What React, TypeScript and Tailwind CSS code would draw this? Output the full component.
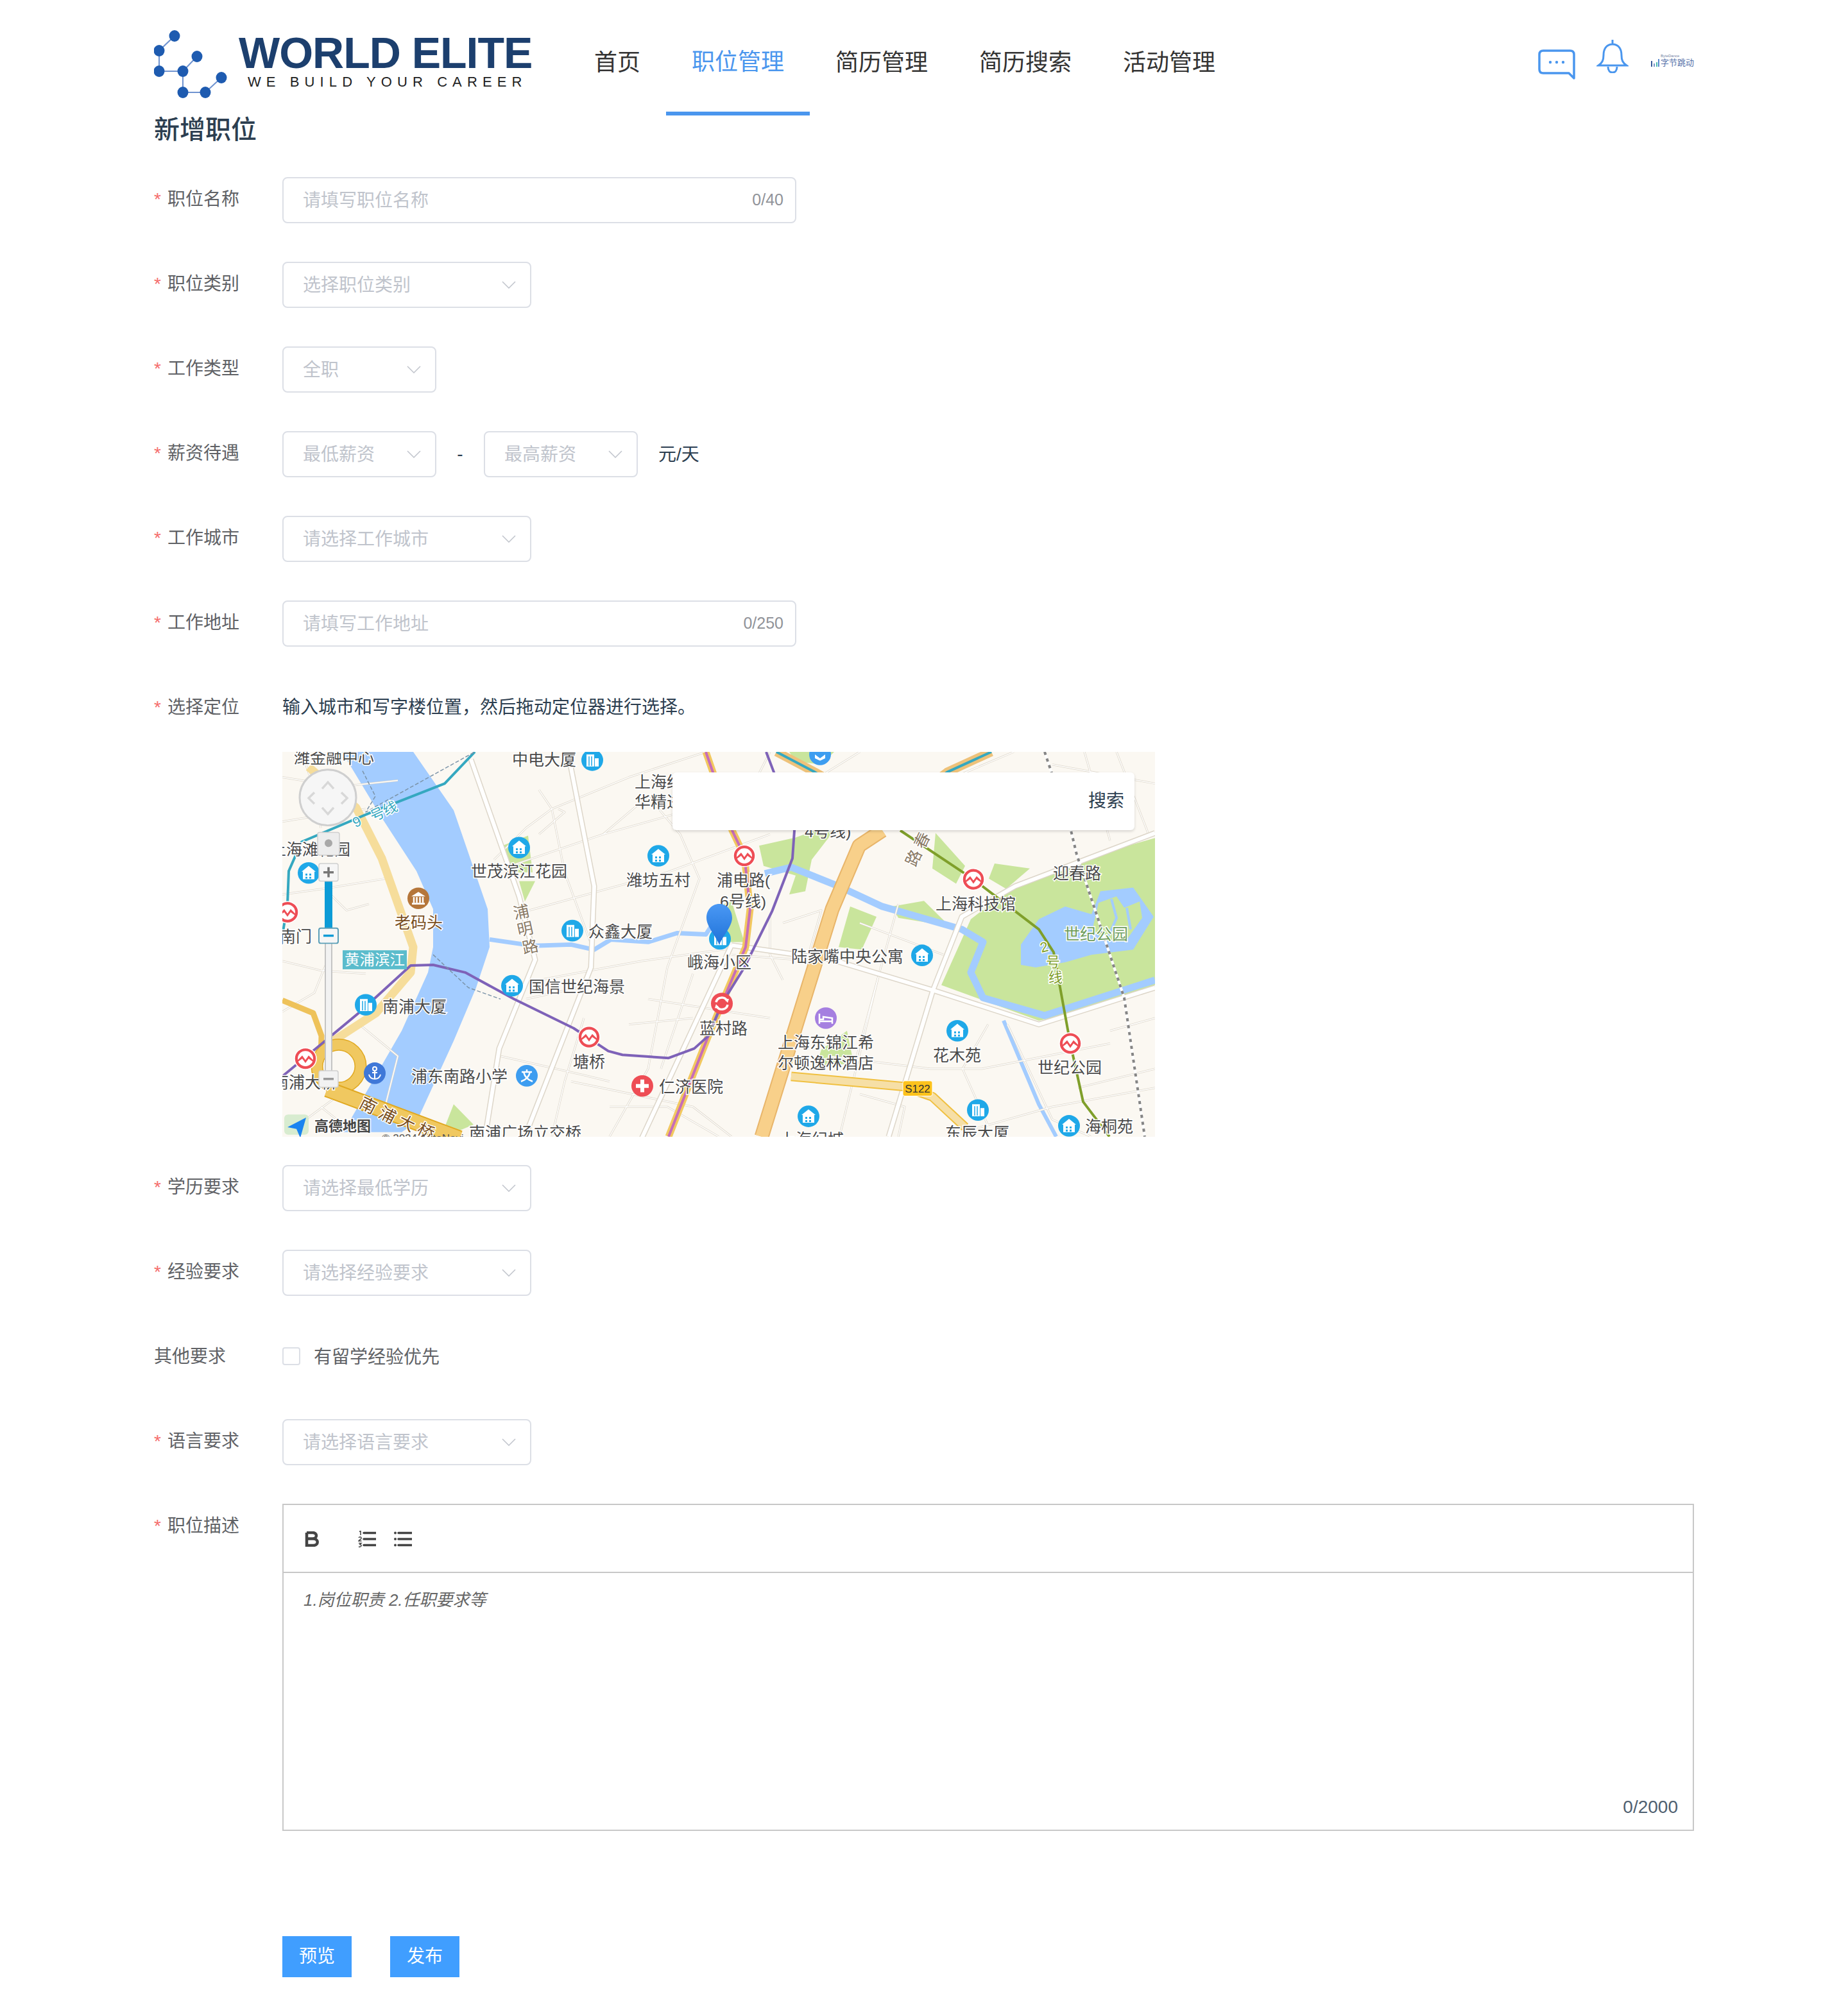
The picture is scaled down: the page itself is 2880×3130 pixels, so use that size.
const navItems = ['首页', '职位管理', '简历管理', '简历搜索', '活动管理']

const thinRoads = [
  'M0 40 L90 55 L180 45', 'M0 110 L60 100 L130 90', 'M0 225 L70 215 L160 200', 'M0 330 L60 345 L130 350', 'M0 410 L50 380 L70 330',
  'M70 220 L100 250 L135 240', 'M30 0 L50 60 L60 120', 'M60 560 L110 600', 'M120 430 L180 480 L160 560', 'M10 600 L90 540',
  'M330 170 L380 120 L420 90 L540 40 L660 0', 'M330 120 L350 170 L390 300', 'M400 60 L420 90 L440 190 L480 300', 'M355 180 L500 130 L640 90',
  'M400 130 L440 95 L430 90', 'M385 250 L600 190 L760 130', 'M500 130 L570 70 L620 130 L650 200 L600 340', 'M600 340 L570 500 L510 607',
  'M400 360 L560 330 L700 310', 'M570 390 L760 420', 'M540 430 L640 420', 'M470 420 L440 520 L420 607', 'M380 390 L470 370', 'M340 480 L470 510 L510 520',
  'M450 520 L640 560 L700 607', 'M640 350 L590 500', 'M510 560 L600 560 L680 607', 'M700 320 L830 330', 'M760 260 L760 320 L780 360', 'M780 270 L840 250 L820 320',
  'M820 50 L900 0', 'M735 50 L760 0', 'M900 270 L1030 320', 'M960 240 L930 350 L890 500', 'M930 350 L870 600', 'M850 480 L1010 500 L1090 500 L1290 460',
  'M1100 430 L1060 500 L1100 590', 'M1130 430 L1200 580 L1260 607', 'M900 540 L970 560 L960 607', 'M1060 600 L1200 560 L1360 530', 'M1250 0 L1290 140', 'M1300 0 L1350 130',
  'M1000 60 L1140 0', 'M1200 20 L1360 50', 'M1240 530 L1360 500', 'M1290 440 L1360 420', 'M1180 90 L1230 40',
]

const whiteRoads = [
  'M1360 372 L1179 430 L1014 376 L857 328 L700 305',
  'M1014 376 L945 607',
  'M1014 376 L1059 260 L1142 212 L1360 128',
  'M445 0 L486 212 L481 340 L378 607',
  'M294 12 L369 228 L394 328 L338 468 L316 607',
  'M560 610 L700 305',
]

const redMetro = [
  [720, 164], [1077, 201], [1228, 460], [8, 253], [478, 450], [36, 484],
]

const houseIcons = [
  [369, 151], [586, 164], [41, 191], [358, 369], [997, 321], [1052, 440], [1226, 590], [820, 575],
]

const officeIcons = [
  [483, 13], [452, 282], [130, 399], [1084, 565], [682, 295],
]

const labels: { t: string; x: number; y: number; c?: string; rot?: number }[] = [
  { t: '潍金融中心', x: 18, y: 10 },
  { t: '中电大厦', x: 358, y: 13 },
  { t: '上海纺', x: 549, y: 48 },
  { t: '华精进', x: 549, y: 80 },
  { t: '上海滩花园', x: -19, y: 154 },
  { t: '南门', x: -4, y: 292 },
  { t: '老码头', x: 175, y: 270, c: '#7a4f1e' },
  { t: '世茂滨江花园', x: 294, y: 189 },
  { t: '潍坊五村', x: 536, y: 203 },
  { t: '浦电路(', x: 677, y: 203 },
  { t: '6号线)', x: 682, y: 236 },
  { t: '众鑫大厦', x: 477, y: 284 },
  { t: '国信世纪海景', x: 384, y: 371 },
  { t: '南浦大厦', x: 156, y: 402 },
  { t: '峨海小区', x: 631, y: 333 },
  { t: '蓝村路', x: 650, y: 437 },
  { t: '塘桥', x: 453, y: 489 },
  { t: '南浦大桥', x: -15, y: 522 },
  { t: '浦东南路小学', x: 201, y: 513 },
  { t: '仁济医院', x: 587, y: 529 },
  { t: '南浦广场立交桥', x: 291, y: 602 },
  { t: '4号线)', x: 814, y: 126 },
  { t: '迎春路', x: 1201, y: 192 },
  { t: '上海科技馆', x: 1018, y: 240 },
  { t: '世纪公园', x: 1218, y: 288, c: '#6f9e5e' },
  { t: '陆家嘴中央公寓', x: 793, y: 323 },
  { t: '上海东锦江希', x: 772, y: 459 },
  { t: '尔顿逸林酒店', x: 772, y: 491 },
  { t: '花木苑', x: 1014, y: 479 },
  { t: '世纪公园', x: 1177, y: 499 },
  { t: '海桐苑', x: 1251, y: 592 },
  { t: '东辰大厦', x: 1033, y: 602 },
  { t: '上海纪城', x: 775, y: 612 },
]

function MapPicture() {
  return (
    <svg width="1360" height="600" viewBox="0 0 1360 600" className="block">
      <rect width="1360" height="600" fill="#fbf8f2" />

      <g transform="scale(1 0.988)">
        {/* parks */}
        <g fill="#c9e59c">
          <path d="M1360 136 L1248 168 L1165 200 L1119 228 L1073 264 L1027 368 L1179 424 L1234 412 L1360 368 Z" />
          <path d="M885 244 L926 260 L903 312 L867 308 Z" />
          <path d="M743 148 L800 135 L830 124 L860 124 L825 170 L815 220 L790 225 L800 195 L750 180 Z" />
          <path d="M1018 128 L1064 180 L1050 208 L1013 184 Z" />
          <path d="M1110 176 L1165 184 L1128 216 L1101 200 Z" />
          <path d="M343 148 L383 132 L390 190 L350 190 Z" />
          <path d="M369 204 L394 204 L378 236 Z" />
          <path d="M267 556 L298 588 L270 600 L250 600 Z" />
          <path d="M950 244 L1000 235 L1040 275 L960 262 Z" />
          <path d="M790 0 L860 0 L840 20 L800 15 Z" />
          <path d="M670 248 L700 235 L720 300 L690 300 Z" />
          <path d="M840 470 L880 440 L890 490 L830 500 Z" />
        </g>

        {/* water */}
        <g fill="#a3ccff">
          <path d="M93 0 L204 0 L267 92 L320 248 L323 308 L302 372 L267 456 L209 584 L186 600 L95 600 L186 440 L227 348 L235 308 L235 248 L209 188 L155 104 Z" />
          <path d="M1179 264 L1220 244 L1261 256 L1275 220 L1326 214 L1358 260 L1326 312 L1261 320 L1220 332 L1174 340 L1151 336 L1151 304 Z" />
        </g>
        <path d="M1272 238 L1300 228 L1312 246 L1336 236 L1340 262 L1316 296 L1284 298 L1262 282 Z" fill="#c9e59c" />
        <g fill="none" stroke="#a3ccff" strokeLinejoin="round">
          <path d="M752 192 L793 182 L867 212 L935 244 L1059 280 L1092 300 L1073 348 L1092 388 L1188 416 L1360 360" strokeWidth="11" />
          <path d="M323 296 L392 306 L450 304 L486 312 L512 296 L570 300 L615 286 L660 288 L673 268" strokeWidth="7" />
          <path d="M1124 424 L1179 556 L1206 607" strokeWidth="6" />
          <path d="M1292 232 L1300 262 L1288 290 M1316 246 L1322 280" strokeWidth="4" />
        </g>

        {/* roads */}
        <g fill="none" strokeLinejoin="round">
          <g stroke="#ddd6c9" strokeWidth="3">
            {thinRoads.map((d) => (
              <path key={d} d={d} />
            ))}
          </g>
          <g stroke="#fff" strokeWidth="1.5">
            {thinRoads.map((d) => (
              <path key={d} d={d} />
            ))}
          </g>
          <g stroke="#ddd6c9" strokeWidth="9">
            {whiteRoads.map((d) => (
              <path key={d} d={d} />
            ))}
          </g>
          <g stroke="#fff" strokeWidth="6">
            {whiteRoads.map((d) => (
              <path key={d} d={d} />
            ))}
          </g>

          <path d="M935 124 L899 148 L857 248 L830 336 L747 607" stroke="#e8b56a" strokeWidth="23" />
          <path d="M935 124 L899 148 L857 248 L830 336 L747 607" stroke="#f8d08a" strokeWidth="19" />
          <path d="M41 24 L115 88 L155 168 L204 308 L200 348 L146 412 L79 456" stroke="#f6dd9b" strokeWidth="13" />
          <path d="M0 392 L48 412 L61 448 L60 490" stroke="#eec25a" strokeWidth="9" />
          <path d="M793 512 L968 528 L1013 544 L1064 592" stroke="#f0c040" strokeWidth="15" />
          <path d="M793 512 L968 528 L1013 544 L1064 592" stroke="#f6dfa6" strokeWidth="11" />
          <circle cx="88" cy="496" r="34" stroke="#e0a820" strokeWidth="19" />
          <circle cx="88" cy="496" r="34" stroke="#f0c860" strokeWidth="16" />
          <path d="M70 532 L276 610" stroke="#e0a820" strokeWidth="26" />
          <path d="M70 532 L276 610" stroke="#f0c860" strokeWidth="22" />
          <path d="M770 0 L830 32 L870 55" stroke="#eec27a" strokeWidth="14" />
          <path d="M1105 0 L1036 32 L1000 60" stroke="#eec27a" strokeWidth="14" />
          <path d="M602 607 L664 448 L692 380 L722 308 L729 248 L720 164 L701 124 L671 32 L660 0" stroke="#f2c860" strokeWidth="11" />

          <path d="M300 0 L253 50 L137 96 L30 142 L10 188 L8 240 L0 290" stroke="#35a8c0" strokeWidth="4" />
          <path d="M770 0 L830 32 L870 55" stroke="#35a8c0" strokeWidth="4" />
          <path d="M1105 0 L1036 32 L1000 60" stroke="#35a8c0" strokeWidth="4" />
          <path d="M602 607 L664 448 L692 380 L722 308 L729 248 L720 164 L701 124 L671 32 L660 0" stroke="#c66db8" strokeWidth="4" />
          <path d="M0 512 L119 412 L200 337 L235 336 L285 348 L361 390 L454 436 L508 472 L530 478 L602 483 L642 468 L664 448 L685 397 L720 340 L763 252 L795 168 L798 124 L766 32 L754 0" stroke="#7e62b8" strokeWidth="4" />
          <path d="M963 124 L1077 201 L1179 280 L1202 316 L1228 460 L1248 552 L1289 607" stroke="#7f9f2a" strokeWidth="4" />
          <path d="M1188 0 L1229 124 L1238 162 L1312 388 L1344 607" stroke="#fff" strokeWidth="4" />
          <path d="M1188 0 L1229 124 L1238 162 L1312 388 L1344 607" stroke="#858585" strokeWidth="4" strokeDasharray="5 6" />
          <path d="M235 320 L290 372 L340 390" stroke="#7b93a8" strokeWidth="1.5" strokeDasharray="6 3" />
          <path d="M125 30 L145 70 L130 95 L300 0" stroke="#7b93a8" strokeWidth="1.5" strokeDasharray="6 3" />
        </g>

        {/* labels */}
        <g fontSize="25" dominantBaseline="central" stroke="#fff" strokeWidth="3" className="[paint-order:stroke]">
          {labels.map((l) => (
            <text key={l.t + l.x} x={l.x} y={l.y} fill={l.c ?? '#4a4a4a'}>
              {l.t}
            </text>
          ))}
          <g fill="#8a7a66">
            <text x="360" y="253" transform="rotate(-12 372 253)">浦</text>
            <text x="366" y="280" transform="rotate(-12 378 280)">明</text>
            <text x="374" y="308" transform="rotate(-12 386 308)">路</text>
            <text x="985" y="140" transform="rotate(-65 997 140)">春</text>
            <text x="972" y="168" transform="rotate(-65 984 168)">路</text>
          </g>
          <g fill="#35a8c0" fontSize="22">
            <text x="110" y="110" transform="rotate(-25 117 110)">9</text>
            <text x="136" y="93" transform="rotate(-25 160 93)">号线</text>
          </g>
          <g fill="#7f9f2a" fontSize="22">
            <text x="1181" y="308" transform="rotate(-15 1187 308)">2</text>
            <text x="1190" y="332">号</text>
            <text x="1194" y="356">线</text>
          </g>
          <g fill="#7a4f1e" fontSize="26">
            <text x="122" y="552" transform="rotate(27 122 552)">南</text>
            <text x="152" y="567" transform="rotate(27 152 567)">浦</text>
            <text x="182" y="580" transform="rotate(27 182 580)">大</text>
            <text x="212" y="593" transform="rotate(27 212 593)">桥</text>
          </g>
        </g>

        {/* scenic tag */}
        <rect x="94" y="313" width="100" height="30" fill="#5bbccc" />
        <text x="97" y="328" fontSize="23.5" fill="#fff" dominantBaseline="central">黄浦滨江</text>

        {/* metro stations */}
        {redMetro.map(([x, y]) => (
          <g key={`${x}-${y}`} transform={`translate(${x} ${y})`}>
            <circle r="17" fill="#ee4d55" stroke="#fff" strokeWidth="1.5" />
            <circle r="12" fill="#fff" />
            <path d="M-12 2 L-5 -5 L0 2 L5 -5 L12 2 L12 5 L5 0 L0 7 L-5 0 L-12 5 Z" fill="#ee4d55" />
          </g>
        ))}
        <g transform="translate(685 397)">
          <circle r="17" fill="#ee4d55" />
          <path d="M-9 -2 A9 9 0 0 1 8 -4 M9 2 A9 9 0 0 1 -8 4" fill="none" stroke="#fff" strokeWidth="3.5" />
          <path d="M4 -8 L11 -7 L9 -1 Z M-4 8 L-11 7 L-9 1 Z" fill="#fff" />
        </g>

        {/* poi icons */}
        {houseIcons.map(([x, y]) => (
          <g key={`${x}-${y}`} transform={`translate(${x} ${y})`}>
            <circle r="17" fill="#1fa8e8" />
            <path d="M0 -11 L11 -2 L9 -2 L9 10 L-9 10 L-9 -2 L-11 -2 Z" fill="#fff" />
            <path d="M-5 1 H-2 V4 H-5 Z M1 1 H4 V4 H1 Z M-5 6 H-2 V9 H-5 Z M1 6 H4 V9 H1 Z" fill="#1fa8e8" />
          </g>
        ))}
        {officeIcons.map(([x, y]) => (
          <g key={`${x}-${y}`} transform={`translate(${x} ${y})`}>
            <circle r="17" fill="#1fa8e8" />
            <path d="M-9 10 V-9 H3 V10 Z M4 10 V-3 H10 V10 Z" fill="#fff" />
            <path d="M-5 -6 V9 M-1 -6 V9" stroke="#1fa8e8" strokeWidth="1.5" />
          </g>
        ))}
        <g transform="translate(212 231)">
          <circle r="17" fill="#b5763a" />
          <path d="M-11 -3 L0 -10 L11 -3 Z M-10 7 H10 V10 H-10 Z" fill="#fff" />
          <path d="M-7 -2 V7 M-2.5 -2 V7 M2.5 -2 V7 M7 -2 V7" stroke="#fff" strokeWidth="2.5" />
        </g>
        <g transform="translate(144 507)">
          <circle r="17" fill="#3f78d8" />
          <circle cy="-7" r="3" fill="none" stroke="#fff" strokeWidth="2" />
          <path d="M0 -4 V9 M-9 2 C-8 7 -4 9 0 9 C4 9 8 7 9 2 M-4 -1 H4" fill="none" stroke="#fff" strokeWidth="2" />
        </g>
        <g transform="translate(381 511)">
          <circle r="17" fill="#3d9df0" />
          <path d="M-8 -6 H8 M0 -10 V-6 M-5 -6 C-3 3 3 7 9 9 M5 -6 C3 3 -3 7 -9 9" fill="none" stroke="#fff" strokeWidth="2.5" />
        </g>
        <g transform="translate(561 527)">
          <circle r="17" fill="#ee4d55" />
          <path d="M-3 -10 H3 V-3 H10 V3 H3 V10 H-3 V3 H-10 V-3 H-3 Z" fill="#fff" />
        </g>
        <g transform="translate(847 420)">
          <circle r="17" fill="#a57fe0" />
          <path d="M-10 -7 V9 M10 1 V9 M-10 5 H10 V0 L-4 -2 V2 H-10" fill="none" stroke="#fff" strokeWidth="2.5" />
        </g>
        <g transform="translate(838 4)">
          <circle r="17" fill="#3d9df0" />
          <path d="M-8 0 L0 6 L8 0 V6 L0 10 L-8 6 Z" fill="#fff" />
        </g>

        {/* road shield */}
        <rect x="967" y="519" width="46" height="24" rx="3" fill="#fdc21c" stroke="#fff" />
        <text x="990" y="532" fontSize="17" fill="#333" textAnchor="middle" dominantBaseline="central" className="font-['Liberation_Sans_Narrow','Liberation_Sans',sans-serif]">S122</text>

        {/* marker */}
        <defs>
          <linearGradient id="pinFill" x1="0" y1="0" x2="0" y2="1">
            <stop offset="0" stopColor="#4a98f4" />
            <stop offset="1" stopColor="#1f72d8" />
          </linearGradient>
        </defs>
        <path d="M681 240 C669 240 661 250 661 262 C661 275 675 290 681 304 C687 290 701 275 701 262 C701 250 693 240 681 240 Z" fill="url(#pinFill)" />

        {/* amap zoom control */}
        <circle cx="71" cy="72" r="44" fill="#f6f6f6" stroke="#cfcfcf" strokeWidth="3" />
        <path d="M62 58 L71 48 L80 58 M62 88 L71 98 L80 88 M50 64 L41 73 L50 82 M92 64 L101 73 L92 82" fill="none" stroke="#d8d8d8" strokeWidth="3.5" />
        <rect x="67" y="276" width="10" height="240" fill="#f2f2f2" stroke="#c4c4c4" strokeWidth="2" />
        <rect x="66" y="204" width="12" height="76" fill="#0c9bd6" />
        <rect x="55" y="127" width="34" height="36" rx="3" fill="#ededed" stroke="#cfcfcf" strokeWidth="1.5" />
        <circle cx="72" cy="144" r="6" fill="#a8a8a8" />
        <rect x="57" y="176" width="30" height="28" rx="3" fill="#f6f6f6" stroke="#cfcfcf" strokeWidth="1.5" />
        <path d="M64 190 H80 M72 182 V198" stroke="#777" strokeWidth="3.5" />
        <rect x="57" y="278" width="30" height="24" rx="3" fill="#f6f6f6" stroke="#5b9fb8" strokeWidth="2" />
        <path d="M64 290 H80" stroke="#0c9bd6" strokeWidth="3.5" />
        <rect x="57" y="503" width="30" height="26" rx="3" fill="#f2f2f2" stroke="#cfcfcf" strokeWidth="1.5" />
        <path d="M64 516 H80" stroke="#999" strokeWidth="3.5" />

        {/* amap logo */}
        <rect x="3" y="572" width="38" height="32" rx="6" fill="#d8ecd0" />
        <path d="M37 577 L8 592 L22 595 L28 609 Z" fill="#1a84f0" />
        <text x="50" y="591" fontSize="22" fontWeight="700" fill="#444" stroke="#fff" strokeWidth="3" dominantBaseline="central" className="[paint-order:stroke]">高德地图</text>
        <text x="155" y="610" fontSize="17" fill="#555" dominantBaseline="central">© 2024 AutoNavi</text>
      </g>
    </svg>
  )
}

function Chevron() {
  return (
    <svg width="22" height="12" viewBox="0 0 22 12" fill="none" stroke="#c0c4cc" strokeWidth="1.5">
      <path d="M1 1 L11 11 L21 1" />
    </svg>
  )
}

function SelectBox({ text, width }: { text: string; width: string }) {
  return (
    <div className={`flex h-[72px] items-center justify-between rounded-lg border-2 border-[#dcdfe6] bg-white pl-[30px] pr-[22px] text-[#c0c4cc] ${width}`}>
      <span className="pt-[2px]">{text}</span>
      <Chevron />
    </div>
  )
}

function TextBox({ text, count }: { text: string; count: string }) {
  return (
    <div className="flex h-[72px] w-[801px] items-center justify-between rounded-lg border-2 border-[#dcdfe6] bg-white pl-[30px] pr-[18px]">
      <span className="pt-[2px] text-[#c0c4cc]">{text}</span>
      <span className="text-[25px] text-[#909399]">{count}</span>
    </div>
  )
}

function Row({ label, required = true, children }: { label: string; required?: boolean; children: React.ReactNode }) {
  return (
    <div className="flex">
      <div className="w-[200px] shrink-0 leading-[70px] text-[#606266]">
        {required && <span className="mr-[10px] text-[#f56c6c]">*</span>}
        {label}
      </div>
      <div className="min-w-0 flex-1">{children}</div>
    </div>
  )
}

export default function App() {
  return (
    <div className="h-[3130px] w-[2880px] bg-white px-[240px] font-['Liberation_Sans','Noto_Sans_CJK_SC',sans-serif] text-[28px]">
      <header className="flex h-[180px] items-stretch justify-between">
        <div className="flex">
          <div className="relative w-[646px]">
            <svg width="125" height="110" viewBox="240 45 125 110" className="absolute left-0 top-[45px]">
              <path d="M272 56 L248 79 V111 H285 V144 H320 L345 121 M285 111 L307 88" fill="none" stroke="#6f93d0" strokeWidth="2" />
              {[[272, 56], [248, 79], [307, 88], [248, 111], [285, 111], [345, 121], [285, 144], [320, 144]].map(([cx, cy]) => (
                <ellipse key={`${cx}-${cy}`} cx={cx} cy={cy} rx="8.5" ry="9" fill="#1e5bb0" />
              ))}
            </svg>
            <div className="absolute left-[132px] top-[44px] whitespace-nowrap text-[68px] font-bold leading-[76px] tracking-[-1px] text-[#1c3f6e]">WORLD ELITE</div>
            <div className="absolute left-[146px] top-[116px] whitespace-nowrap text-[22px] leading-[24px] tracking-[8.1px] text-[#222]">WE BUILD YOUR CAREER</div>
          </div>
          <nav className="flex text-[36px] text-[#333]">
            {navItems.map((item) => (
              <div
                key={item}
                className={`flex items-center border-b-[6px] px-10 ${item === '职位管理' ? 'border-[#4a96ee] pt-[20px] text-[#4a96ee]' : 'border-transparent pt-[22px]'}`}
              >
                {item}
              </div>
            ))}
          </nav>
        </div>

        <div className="flex items-start pt-[62px]">
          <svg width="58" height="48" viewBox="0 0 58 48" fill="none" className="mt-[15px]">
            <path d="M8 2 H50 Q56 2 56 8 V45 L48 37 H8 Q2 37 2 31 V8 Q2 2 8 2 Z" stroke="#4a96ee" strokeWidth="3.5" strokeLinejoin="round" />
            <circle cx="19" cy="20" r="2.2" fill="#4a96ee" />
            <circle cx="29" cy="20" r="2.2" fill="#4a96ee" />
            <circle cx="39" cy="20" r="2.2" fill="#4a96ee" />
          </svg>
          <svg width="50" height="52" viewBox="0 0 50 52" fill="none" stroke="#4a96ee" strokeWidth="3" className="ml-[33px]">
            <path d="M25 0 V7 M25 7 C15 7 11 15 11 24 C11 32 9 36 3 40 H47 C41 36 39 32 39 24 C39 15 35 7 25 7 Z M18 42 C18 48 21 51 25 51 C29 51 32 48 32 42" />
          </svg>
          <div className="ml-[34px] mt-[22px] flex items-end">
            <svg width="14" height="14" viewBox="0 0 14 14" className="mr-[2px]">
              <path d="M1 5 H3 V14 H1 Z" fill="#3a5a9a" />
              <path d="M5 9 H7 V14 H5 Z" fill="#7a94c8" />
              <path d="M9 7 H11 V14 H9 Z" fill="#4fc0b0" />
              <path d="M12 2 H14 V14 H12 Z" fill="#5a8ad0" />
            </svg>
            <div className="flex flex-col">
              <span className="text-[6px] leading-[7px] text-[#6f7f9f]">ByteDance</span>
              <span className="whitespace-nowrap text-[13px] leading-[13px] text-[#5470a8]">字节跳动</span>
            </div>
          </div>
        </div>
      </header>

      <h1 className="mb-[52px] text-[40px] font-medium leading-[44px] text-[#2c3e50]">新增职位</h1>

      <div className="flex flex-col gap-[60px]">
        <Row label="职位名称">
          <TextBox text="请填写职位名称" count="0/40" />
        </Row>
        <Row label="职位类别">
          <SelectBox text="选择职位类别" width="w-[388px]" />
        </Row>
        <Row label="工作类型">
          <SelectBox text="全职" width="w-[240px]" />
        </Row>
        <Row label="薪资待遇">
          <div className="flex items-center">
            <SelectBox text="最低薪资" width="w-[240px]" />
            <span className="w-[74px] text-center text-[#2c3e50]">-</span>
            <SelectBox text="最高薪资" width="w-[240px]" />
            <span className="ml-[32px] pt-[2px] text-[#2c3e50]">元/天</span>
          </div>
        </Row>
        <Row label="工作城市">
          <SelectBox text="请选择工作城市" width="w-[388px]" />
        </Row>
        <Row label="工作地址">
          <TextBox text="请填写工作地址" count="0/250" />
        </Row>
      </div>

      <div className="mt-[60px]">
        <Row label="选择定位">
          <p className="h-[104px] leading-[70px] text-[#2c3e50]">输入城市和写字楼位置，然后拖动定位器进行选择。</p>
          <div className="relative h-[600px] w-[1360px] overflow-hidden">
            <MapPicture />
            <div className="absolute left-[608px] top-[32px] flex h-[90px] w-[720px] items-center justify-end rounded-md bg-white pr-4 text-[#2c3e50] shadow-[0_2px_4px_rgba(0,0,0,0.15)]">
              搜索
            </div>
          </div>
        </Row>
      </div>

      <div className="mt-[44px] flex flex-col gap-[60px]">
        <Row label="学历要求">
          <SelectBox text="请选择最低学历" width="w-[388px]" />
        </Row>
        <Row label="经验要求">
          <SelectBox text="请选择经验要求" width="w-[388px]" />
        </Row>
        <Row label="其他要求" required={false}>
          <div className="flex h-[72px] items-start pt-[20px]">
            <span className="size-[28px] rounded-[4px] border-2 border-[#dcdfe6] bg-white" />
            <span className="ml-[21px] leading-[31px] text-[#606266]">有留学经验优先</span>
          </div>
        </Row>
        <Row label="语言要求">
          <SelectBox text="请选择语言要求" width="w-[388px]" />
        </Row>
        <Row label="职位描述">
          <div className="flex h-[510px] flex-col border-2 border-[#c8c8c8]">
            <div className="flex h-[106px] items-center border-b-2 border-[#c8c8c8] pl-[33px] pt-[2px]">
              <svg width="22" height="24" viewBox="0 0 22 24" fill="none" stroke="#444" strokeWidth="4.5">
                <path d="M3 2 H12 C20 2 20 11.5 12 11.5 H3 M3 11.5 H13 C22 11.5 22 22 13 22 H3 Z M3 2 V22" />
              </svg>
              <svg width="28" height="26" viewBox="0 0 28 26" className="ml-[61px]">
                <path d="M9 3.5 H28 M9 13 H28 M9 22.5 H28" stroke="#444" strokeWidth="3.5" strokeLinecap="round" />
                <path d="M2 1.5 L4 0.5 V7 M1 11 C2 9 5.5 9.5 5 12 C4.5 13.5 2 14.5 1 16 H5.5 M1 19.5 H5 L3 21.5 C6 21.5 6 26 1 25" fill="none" stroke="#444" strokeWidth="1.5" />
              </svg>
              <svg width="28" height="26" viewBox="0 0 28 26" className="ml-[28px]">
                <path d="M7 3.5 H28 M7 13 H28 M7 22.5 H28" stroke="#444" strokeWidth="3.5" strokeLinecap="round" />
                <circle cx="2" cy="3.5" r="2" fill="#444" />
                <circle cx="2" cy="13" r="2" fill="#444" />
                <circle cx="2" cy="22.5" r="2" fill="#444" />
              </svg>
            </div>
            <div className="flex flex-1 flex-col justify-between pb-[17px] pl-[31px] pr-[23px] pt-[24px]">
              <p className="text-[26px] italic leading-[36px] text-[#666]">1.岗位职责 2.任职要求等</p>
              <p className="self-end text-[28px] leading-[36px] text-[#4f6070]">0/2000</p>
            </div>
          </div>
        </Row>
      </div>

      <div className="mt-[164px] flex gap-[60px] pl-[200px]">
        <button className="h-[64px] w-[108px] bg-[#409eff] text-white">预览</button>
        <button className="h-[64px] w-[108px] bg-[#409eff] text-white">发布</button>
      </div>
    </div>
  )
}
